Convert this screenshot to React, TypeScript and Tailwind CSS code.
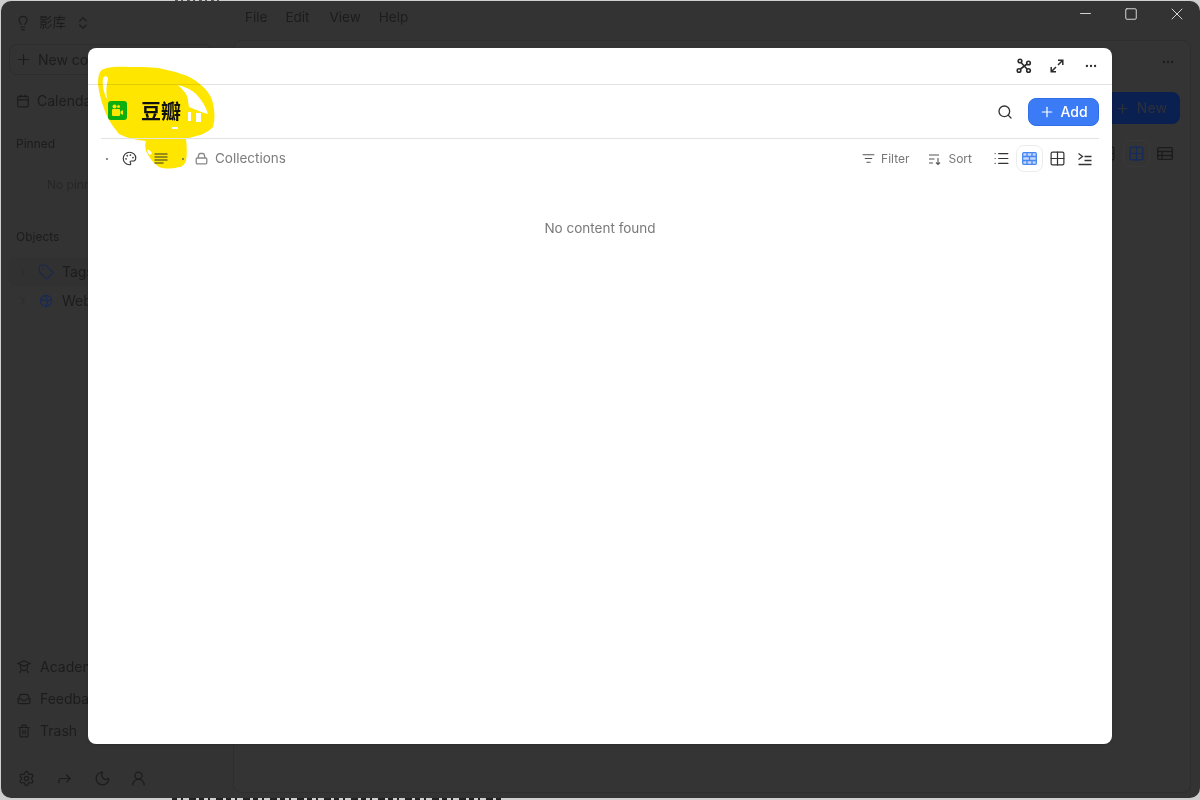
import {
  Calendar,
  ChevronRight,
  ChevronsUpDown,
  Ellipsis,
  Forward,
  Grid2x2,
  Inbox,
  Lightbulb,
  List,
  ListFilter,
  Minus,
  Moon,
  Palette,
  Plus,
  Search,
  Settings,
  Square,
  Tag,
  Trash2,
  UserRound,
  X,
} from 'lucide-react';

const font = "font-['Inter','Noto_Sans_CJK_SC',sans-serif]";

function GraphIcon() {
  return (
    <svg width="16" height="16" viewBox="0 0 16 16" fill="none" stroke="currentColor" strokeWidth="1.6">
      <circle cx="4" cy="3" r="1.8" />
      <circle cx="12.500" cy="5" r="1.800" />
      <circle cx="3" cy="12.500" r="1.800" />
      <circle cx="12.500" cy="12.500" r="1.800" />
      <path d="M5 4.500 11 11M4.500 11 11 6" />
    </svg>
  );
}

function ExpandIcon() {
  return (
    <svg width="14" height="14" viewBox="0 0 14 14" fill="none" stroke="currentColor" strokeWidth="1.5">
      <path d="M8 6l4.500-4.500M8 1.200H12.800V6M6 8l-4.500 4.500M1.200 8V12.800H6" />
    </svg>
  );
}

function SortIcon() {
  return (
    <svg width="14" height="14" viewBox="0 0 14 14" fill="none" stroke="currentColor" strokeWidth="1.1">
      <path d="M1 3h10M1 7h5.500M1 11h4M10 6v6.500M8 10.500l2 2 2-2" />
    </svg>
  );
}

function BrickIcon() {
  return (
    <svg width="15" height="13" viewBox="0 0 15 13" fill="none" stroke="#4a86f0" strokeWidth="1.300">
      <rect x="0.700" y="0.700" width="13.600" height="11.600" rx="1" fill="#c4d9fc" />
      <path d="M0.700 4.500h13.600M0.700 8.500h13.600M5 0.700v3.800M10 0.700v3.800M7.500 4.500v4M5 8.500v3.800M10 8.500v3.800" />
    </svg>
  );
}

function IndentIcon() {
  return (
    <svg width="16" height="14" viewBox="0 0 16 14" fill="none" stroke="currentColor" strokeWidth="1.300">
      <path d="M1.500 1.500 5.500 4.500 1.500 7.500M7.500 4.500h7M7.500 8.500h7M1.500 12.500h13" />
    </svg>
  );
}

function LinesIcon() {
  return (
    <svg width="14" height="11" viewBox="0 0 14 11" fill="none" stroke="currentColor" strokeWidth="1.200">
      <path d="M0.500 1h13M0.500 4h13M0.500 7h13M0.500 10h9" />
    </svg>
  );
}

function ShelfIcon() {
  return (
    <svg width="13" height="13" viewBox="0 0 13 13" fill="none" stroke="currentColor" strokeWidth="1.300">
      <path d="M3 6 3.800 2.500A1.300 1.300 0 0 1 5 1.500h3a1.300 1.300 0 0 1 1.200 1L10 6" />
      <rect x="1.200" y="6" width="10.600" height="5.800" rx="1.200" />
    </svg>
  );
}

function AcademyIcon() {
  return (
    <svg width="14" height="14" viewBox="0 0 14 14" fill="none" stroke="currentColor" strokeWidth="1.300">
      <path d="M1 3.500 7 1l6 2.500L7 6 1 3.500Z" />
      <path d="M3.500 5v2a3.500 3.500 0 0 0 7 0V5M4 10.500 2.500 13M10 10.500l1.500 2.500" />
    </svg>
  );
}

function WebIcon() {
  return (
    <svg width="14" height="14" viewBox="0 0 14 14" fill="none" stroke="#182a55" strokeWidth="1.300">
      <circle cx="7" cy="7" r="5.500" />
      <path d="M2 5.500 9 7l-2 5M6 1.500 9 7l3.500-1.500" />
    </svg>
  );
}

function SideRow({ icon, label, className = '' }: { icon: React.ReactNode; label: string; className?: string }) {
  return (
    <div className={`flex h-8 items-center text-sm text-[#1c1c1c] ${className}`}>
      {icon}
      <span className="whitespace-nowrap">{label}</span>
    </div>
  );
}

function Sidebar() {
  return (
    <aside className="flex h-full w-[232px] shrink-0 flex-col text-[#1c1c1c]">
      <div className="flex h-[43px] items-center gap-2 pl-[14px] text-[13.5px]">
        <Lightbulb size={16} strokeWidth={1.7} />
        <span>影库</span>
        <ChevronsUpDown size={16} strokeWidth={1.7} className="ml-px" />
      </div>
      <div className="mx-[8px] flex h-[31px] w-[204px] items-center gap-[6px] rounded-lg border border-[#2d2d2d] pl-[5px] text-sm">
        <Plus size={17} strokeWidth={1.7} />
        <span>New collection</span>
      </div>
      <SideRow
        icon={<Calendar size={14} strokeWidth={2} />}
        label="Calendar"
        className="mt-[10px] gap-[7px] pl-[15px]"
      />
      <div className="mt-[19px] pl-[15px] text-xs">Pinned</div>
      <div className="mt-[25px] pl-[46px] text-xs text-[#262626]">No pinned items</div>
      <div className="mt-[36px] pl-[15px] text-xs">Objects</div>
      <div className="mx-[8px] mt-[12px] flex h-[29px] items-center rounded-lg bg-[#313131] pl-[8px] text-sm">
        <ChevronRight size={12} className="text-[#292929]" />
        <Tag size={16} strokeWidth={1.6} className="ml-[9px] text-[#18284f]" />
        <span className="ml-[8px]">Tags</span>
      </div>
      <div className="mx-[8px] flex h-[29px] items-center pl-[8px] text-sm">
        <ChevronRight size={12} className="text-[#292929]" />
        <span className="ml-[10px]">
          <WebIcon />
        </span>
        <span className="ml-[9px]">Websites</span>
      </div>
      <div className="mt-auto">
        <SideRow icon={<AcademyIcon />} label="Academy" className="gap-[9px] pl-[16px]" />
        <SideRow icon={<Inbox size={14} strokeWidth={2} />} label="Feedback" className="gap-[9px] pl-[16px]" />
        <SideRow icon={<Trash2 size={14} strokeWidth={2} />} label="Trash" className="gap-[9px] pl-[16px]" />
        <div className="mb-[4px] mt-[15px] flex h-[32px] items-center gap-[21px] pl-[17px]">
          <Settings size={17} strokeWidth={1.7} />
          <Forward size={17} strokeWidth={1.7} />
          <Moon size={17} strokeWidth={1.7} />
          <UserRound size={17} strokeWidth={1.7} className="-ml-[2px]" />
        </div>
      </div>
    </aside>
  );
}

function BackgroundMain() {
  return (
    <main className="flex h-full flex-1 flex-col text-[#1c1c1c]">
      <div className="flex h-[39px] shrink-0 items-start">
        <div className="flex h-[33px] items-center gap-[18px] pl-[12px] text-[13.5px]">
          <span>File</span>
          <span>Edit</span>
          <span className="ml-[2px]">View</span>
          <span>Help</span>
        </div>
        <div className="ml-auto flex h-[25px] items-center text-[#d6d6d6]">
          <span className="flex w-[46px] justify-center">
            <Minus size={17} strokeWidth={1.4} />
          </span>
          <span className="flex w-[46px] justify-center">
            <Square size={14} strokeWidth={1.7} />
          </span>
          <span className="flex w-[46px] justify-center">
            <X size={20} strokeWidth={1.2} />
          </span>
        </div>
      </div>
      <div className="mb-[5px] mr-[9px] flex flex-1 flex-col rounded-lg border border-[#2e2e2e] bg-[#343434]">
        <div className="flex h-[42px] items-center justify-end pr-[15px]">
          <Ellipsis size={14} />
        </div>
        <div className="mt-[9px] flex justify-end pr-[10px]">
          <div className="flex h-[32px] w-[90px] items-center justify-end gap-[7px] rounded-lg bg-[#0a2050] pr-[13px] text-sm font-medium text-[#2a2f3c]">
            <Plus size={15} />
            New
          </div>
        </div>
        <div className="mt-[16px] flex items-center justify-end pr-[17px]">
          <Grid2x2 size={17} strokeWidth={1.7} className="mr-[7px] text-[#1c1c1c]" />
          <span className="flex h-[27px] w-[27px] items-center justify-center rounded-lg border border-[#393939]">
            <Grid2x2 size={17} strokeWidth={1.7} className="text-[#122a5e]" />
          </span>
          <span className="ml-[7px]">
            <svg width="16" height="13" viewBox="0 0 16 13" fill="none" stroke="#1c1c1c" strokeWidth="1.300">
              <rect x="0.700" y="0.700" width="14.600" height="11.600" rx="1" />
              <path d="M0.700 4.500h14.600M0.700 8.500h14.600M5 4.500v8" />
            </svg>
          </span>
        </div>
      </div>
    </main>
  );
}

function Scribble() {
  return (
    <svg
      className="absolute left-[-88px] top-[-48px] mix-blend-multiply"
      width="240"
      height="190"
      viewBox="0 0 240 190"
    >
      <path
        fill="#ffe600"
        d="M98 84C98 74 100 70 104 69C112 66 122 67 130 67C142 67 154 67 163 69C176 72 188 75 196 81C206 88 212 96 213 104C215 112 215 120 213 127C208 132 202 135 196 136C193 137 189 138 186 139C187 147 187 155 186 161C184 165 182 167 179 167C172 169 165 169 159 167C153 163 149 157 146 151C145 147 145 144 146 141C136 140 127 138 119 134C114 128 109 121 106 114C102 104 99 94 98 84Z"
      />
      <path fill="#ffffff" d="M103 78C105 75 108 76 108 79C106 86 106 92 107 99C104 94 102 85 103 78Z" />
      <path fill="#ffffff" d="M178 85C186 87 192 90 196 94C202 100 206 107 208 114C204 113 201 112 199 111C195 109 191 108 189 107C188 102 188 97 186 94C184 91 181 88 178 85Z" />
      <path fill="#ffffff" d="M188 112h3v9h-3ZM196 113h5v9h-5Z" />
      <path fill="#ffffff" d="M172 127h6v2h-6Z" />
      <path fill="#ffffff" d="M147 150C149 149 151 151 152 154L149 155Z" />
    </svg>
  );
}

function Dialog() {
  return (
    <div className="absolute left-[88px] top-[48px] flex h-[696px] w-[1024px] flex-col rounded-lg bg-white shadow-sm">
      <Scribble />
      <div className="flex h-[37px] shrink-0 items-center justify-end gap-[20px] border-b border-[#e3e3e3] pr-[14px] text-[#2a2a2a]">
        <span className="-mr-[2px]">
          <GraphIcon />
        </span>
        <ExpandIcon />
        <Ellipsis size={14} />
      </div>
      <div className="relative mx-[13px] flex h-[54px] shrink-0 items-center border-b border-[#e3e3e3]">
        <div className="flex items-center gap-[14px] pl-[7px]">
          <svg className="-mt-[3px]" width="19" height="19" viewBox="0 0 19 19">
            <rect width="19" height="19" rx="3" fill="#0fae0f" />
            <rect x="4" y="8" width="8" height="7" rx="1" fill="#ffe600" />
            <circle cx="6.500" cy="5.500" r="2" fill="#ffe600" />
            <circle cx="10.500" cy="5.500" r="1.500" fill="#ffe600" />
            <path d="M12.500 10.500 15 9v5l-2.500-1.500Z" fill="#ffe600" />
          </svg>
          <span className="text-[20px] font-semibold leading-none text-[#111]">豆瓣</span>
        </div>
        <div className="ml-auto flex items-center gap-[15px]">
          <Search size={16} strokeWidth={2} className="text-[#333]" />
          <button className="flex h-[28px] w-[71px] items-center justify-center gap-[5px] rounded-lg border border-[#2f6fe6] bg-[#3b7cf6] text-sm font-medium text-white">
            <Plus size={16} strokeWidth={1.8} />
            Add
          </button>
        </div>
      </div>
      <div className="relative mx-[13px] flex h-[39px] shrink-0 items-center text-[#7d7d7d]">
        <span className="ml-[5px] h-[2px] w-[2px] rounded-full bg-[#666]" />
        <Palette size={15} strokeWidth={1.8} className="ml-[14px] text-[#333]" />
        <span className="ml-[17px] text-[#333]">
          <LinesIcon />
        </span>
        <span className="ml-[14px] h-[2px] w-[2px] rounded-full bg-[#666]" />
        <span className="ml-[11px] text-[#888]">
          <ShelfIcon />
        </span>
        <span className="ml-[7px] text-[13.5px]">Collections</span>
        <div className="ml-auto flex items-center text-xs">
          <ListFilter size={13} strokeWidth={2} className="text-[#555]" />
          <span className="ml-[6px] text-[#777]">Filter</span>
          <span className="ml-[19px] text-[#555]">
            <SortIcon />
          </span>
          <span className="ml-[6px] text-[#777]">Sort</span>
          <List size={17} strokeWidth={1.7} className="ml-[21px] text-[#333]" />
          <span className="ml-[6px] flex h-[27px] w-[27px] items-center justify-center rounded-lg border border-[#ececec]">
            <BrickIcon />
          </span>
          <Grid2x2 size={17} strokeWidth={1.7} className="ml-[6px] text-[#333]" />
          <span className="ml-[11px] mr-[6px] text-[#333]">
            <IndentIcon />
          </span>
        </div>
      </div>
      <p className="mt-[40px] text-center text-[13.5px] text-[#7a7a7a]">No content found</p>
    </div>
  );
}

export default function App() {
  return (
    <div className={`relative h-[800px] w-[1200px] overflow-hidden bg-[#cfcfcf] pb-[2px] pl-[1px] pt-[1px] ${font}`}>
      <div className="flex h-full rounded-[10px] bg-[#333333]">
        <Sidebar />
        <BackgroundMain />
      </div>
      <svg className="absolute left-[172px] top-[798px]" width="330" height="2">
        <path d="M0 1H330" stroke="#222" strokeWidth="2" strokeDasharray="5 4 2 6 7 3" />
      </svg>
      <svg className="absolute left-[175px] top-0" width="45" height="1">
        <path d="M0 0.500H45" stroke="#555" strokeWidth="1" strokeDasharray="3 3 2 4" />
      </svg>
      <Dialog />
    </div>
  );
}
